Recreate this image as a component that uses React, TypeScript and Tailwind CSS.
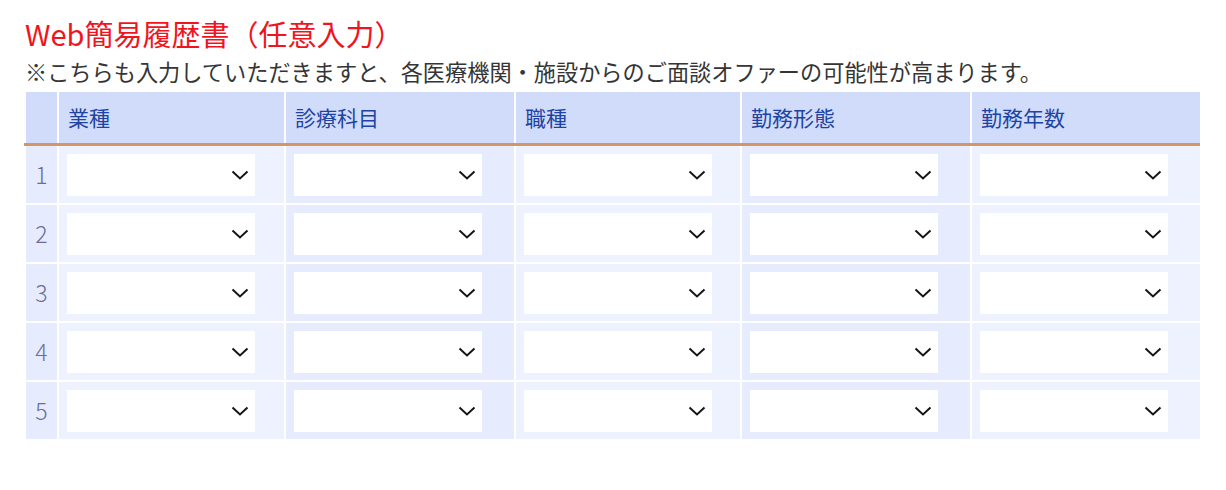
import React from "react";

const cols = ["業種", "診療科目", "職種", "勤務形態", "勤務年数"];
const bodyBg = ["bg-[#eef2fe]", "bg-[#e6ecfd]", "bg-[#eef2fe]", "bg-[#e6ecfd]", "bg-[#eef2fe]"];

function Chevron() {
  return (
    <svg width="18" height="10" viewBox="0 0 18 10" className="text-[#151515]">
      <polyline points="1.5,1.5 9,8.5 16.5,1.5" fill="none" stroke="currentColor" strokeWidth="2" />
    </svg>
  );
}

function SelectBox() {
  return (
    <div className="flex h-[42px] w-[188px] items-center justify-end bg-white pr-[6px]">
      <Chevron />
    </div>
  );
}

export default function App() {
  const font = { fontFamily: '"Noto Sans CJK JP", "Noto Sans", sans-serif' };
  return (
    <div className="h-[490px] w-[1226px] bg-white pl-[25px] pt-[14px]" style={font}>
      <h1 className="text-[29px] leading-[38px] text-[#f0141e]">Web簡易履歴書（任意入力）</h1>
      <p className="mt-[4px] whitespace-nowrap text-[22.2px] leading-[30px] text-[#353535]">
        ※こちらも入力していただきますと、各医療機関・施設からのご面談オファーの可能性が高まります。
      </p>
      <div className="ml-[1px] mt-[6px] w-[1174px]">
        <div className="grid grid-cols-[31px_225px_228px_224px_228px_228px] gap-x-[2px]">
          <div className="h-[51px] bg-[#d1dcfa]" />
          {cols.map((c) => (
            <div key={c} className="flex h-[51px] items-center bg-[#d1dcfa] pl-[9px] text-[21px] text-[#1e44a3]">
              {c}
            </div>
          ))}
        </div>
        <div className="-ml-[2px] h-[3px] w-[1176px] bg-[#d39664]" />
        <div className="grid grid-cols-[31px_225px_228px_224px_228px_228px] gap-x-[2px] gap-y-[2px]">
          {[1, 2, 3, 4, 5].map((n) => (
            <React.Fragment key={n}>
              <div className="flex h-[57px] items-center justify-center bg-[#e6ecfd] text-[23px] font-light text-[#6b6d9f]">
                {n}
              </div>
              {cols.map((c, i) => (
                <div key={c} className={`flex h-[57px] items-center pl-[8px] ${bodyBg[i]}`}>
                  <SelectBox />
                </div>
              ))}
            </React.Fragment>
          ))}
        </div>
      </div>
    </div>
  );
}
